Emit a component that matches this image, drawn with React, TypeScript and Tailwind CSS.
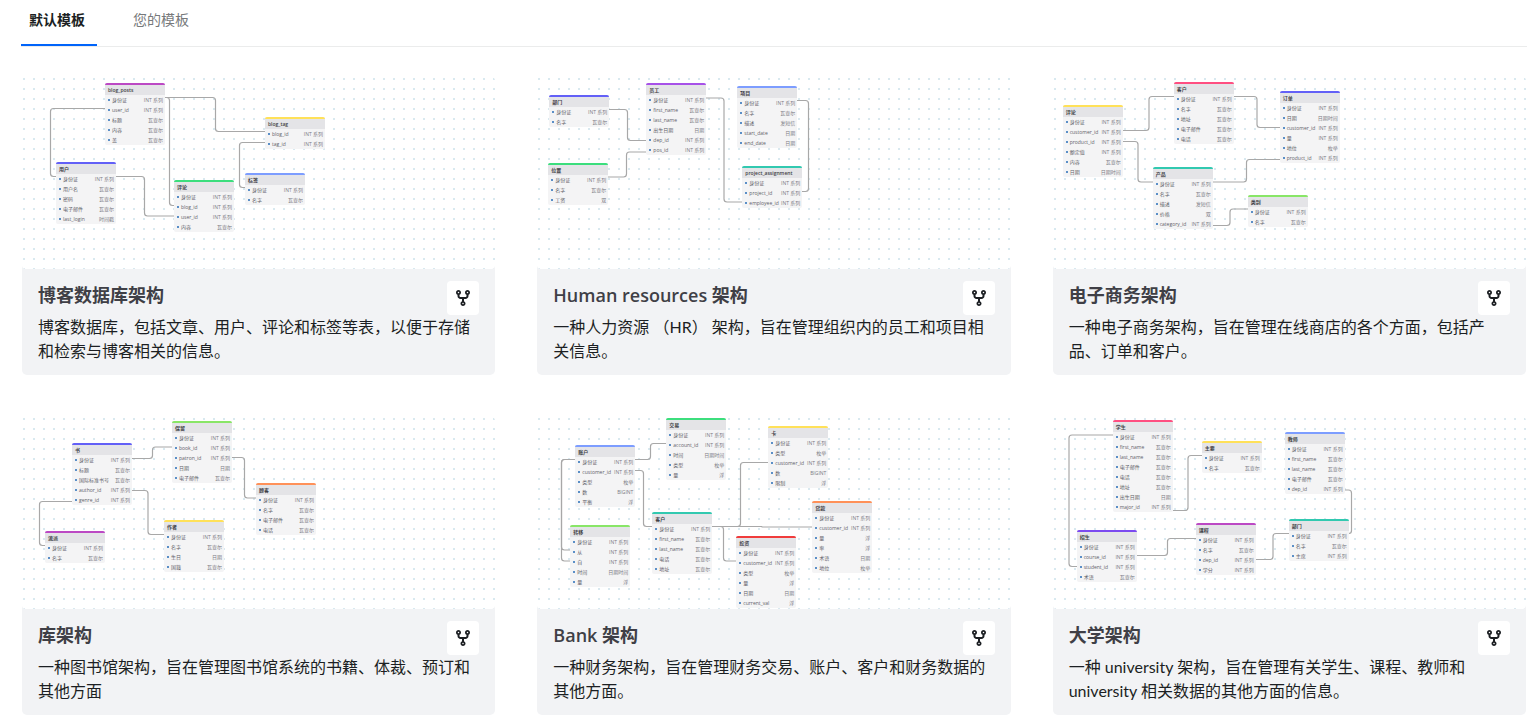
import React, { useState } from "react";
import { FaCodeFork } from "react-icons/fa6";

type Field = [name: string, type: string];
type TableNode = { name: string; x: number; y: number; color: string; fields: Field[] };
type Link = [x1: number, y1: number, midX: number, y2: number, x2: number];
type Template = { title: string; description: string; tables: TableNode[]; links: Link[] };

const INT = "INT 系列";
const VARCHAR = "瓦查尔";
const ID: Field = ["身份证", INT];
const NAME: Field = ["名字", VARCHAR];
const EMAIL: Field = ["电子邮件", VARCHAR];
const PHONE: Field = ["电话", VARCHAR];
const ADDRESS: Field = ["地址", VARCHAR];
const FIRST: Field = ["first_name", VARCHAR];
const LAST: Field = ["last_name", VARCHAR];

const templates: Template[] = [
  {
    title: "博客数据库架构",
    description: "博客数据库，包括文章、用户、评论和标签等表，以便于存储和检索与博客相关的信息。",
    tables: [
      { name: "blog_posts", x: 83, y: 6, color: "#bc49c4", fields: [ID, ["user_id", INT], ["标题", VARCHAR], ["内容", VARCHAR], ["盖", VARCHAR]] },
      { name: "blog_tag", x: 243, y: 40, color: "#ffe159", fields: [["blog_id", INT], ["tag_id", INT]] },
      { name: "用户", x: 34, y: 85, color: "#6360f7", fields: [ID, ["用户名", VARCHAR], ["密码", VARCHAR], EMAIL, ["last_login", "时间戳"]] },
      { name: "评论", x: 152, y: 103, color: "#3cde7d", fields: [ID, ["blog_id", INT], ["user_id", INT], ["内容", VARCHAR]] },
      { name: "标签", x: 223, y: 96, color: "#7d9dff", fields: [ID, NAME] },
    ],
    links: [
      [143, 20.5, 193.5, 54.5, 244],
      [143, 20.5, 147.5, 128.5, 152],
      [83, 31.5, 28.5, 99.5, 34],
      [94, 99.5, 122.5, 139, 152],
      [244, 65.5, 217.5, 110.5, 223],
    ],
  },
  {
    title: "Human resources 架构",
    description: "一种人力资源 （HR） 架构，旨在管理组织内的员工和项目相关信息。",
    tables: [
      { name: "部门", x: 12, y: 18, color: "#6360f7", fields: [ID, NAME] },
      { name: "员工", x: 109, y: 6, color: "#a751e8", fields: [ID, FIRST, LAST, ["出生日期", "日期"], ["dep_id", INT], ["pos_id", INT]] },
      { name: "项目", x: 200, y: 9, color: "#7d9dff", fields: [ID, NAME, ["描述", "发短信"], ["start_date", "日期"], ["end_date", "日期"]] },
      { name: "位置", x: 11, y: 86, color: "#3cde7d", fields: [ID, NAME, ["工资", "双"]] },
      { name: "project_assignment", x: 205, y: 89, color: "#32c9b0", fields: [ID, ["project_id", INT], ["employee_id", INT]] },
    ],
    links: [
      [72, 32.5, 90.5, 63.5, 109],
      [71, 100, 89.5, 75, 109],
      [169, 21, 187, 125, 205],
      [260, 23.5, 271.5, 114.5, 265],
    ],
  },
  {
    title: "电子商务架构",
    description: "一种电子商务架构，旨在管理在线商店的各个方面，包括产品、订单和客户。",
    tables: [
      { name: "评论", x: 10, y: 28, color: "#ffe159", fields: [ID, ["customer_id", INT], ["product_id", INT], ["额定值", INT], ["内容", VARCHAR], ["日期", "日期时间"]] },
      { name: "客户", x: 121, y: 5, color: "#ff4f81", fields: [ID, NAME, ADDRESS, EMAIL, PHONE] },
      { name: "订单", x: 227, y: 14, color: "#6360f7", fields: [ID, ["日期", "日期时间"], ["customer_id", INT], ["量", INT], ["地位", "枚举"], ["product_id", INT]] },
      { name: "产品", x: 100, y: 90, color: "#32c9b0", fields: [ID, NAME, ["描述", "发短信"], ["价格", "双"], ["category_id", INT]] },
      { name: "类别", x: 195, y: 118, color: "#89e667", fields: [ID, NAME] },
    ],
    links: [
      [70, 53.5, 96, 19.5, 121],
      [70, 64.5, 85, 105, 100],
      [181, 19.5, 204, 50.5, 227],
      [160, 105, 193.5, 82.5, 227],
      [160, 148.5, 177, 132, 195],
    ],
  },
  {
    title: "库架构",
    description: "一种图书馆架构，旨在管理图书馆系统的书籍、体裁、预订和其他方面",
    tables: [
      { name: "书", x: 50, y: 26, color: "#6360f7", fields: [ID, ["标题", VARCHAR], ["国际标准书号", VARCHAR], ["author_id", INT], ["genre_id", INT]] },
      { name: "保留", x: 150, y: 4, color: "#89e667", fields: [ID, ["book_id", INT], ["patron_id", INT], ["日期", "日期"], EMAIL] },
      { name: "顾客", x: 234, y: 66, color: "#ff9159", fields: [ID, NAME, EMAIL, PHONE] },
      { name: "作者", x: 142, y: 103, color: "#ffe159", fields: [ID, NAME, ["生日", "日期"], ["国籍", VARCHAR]] },
      { name: "流派", x: 23, y: 114, color: "#bc49c4", fields: [ID, NAME] },
    ],
    links: [
      [110, 41.5, 130.5, 30, 150],
      [110, 73.5, 126, 117.5, 142],
      [50, 84.5, 17.5, 128.5, 23],
      [210, 40.5, 222.5, 81, 234],
    ],
  },
  {
    title: "Bank 架构",
    description: "一种财务架构，旨在管理财务交易、账户、客户和财务数据的其他方面。",
    tables: [
      { name: "账户", x: 38, y: 28, color: "#7d9dff", fields: [ID, ["customer_id", INT], ["类型", "枚举"], ["数", "BIGINT"], ["平衡", "浮"]] },
      { name: "交易", x: 129, y: 1, color: "#3cde7d", fields: [ID, ["account_id", INT], ["时间", "日期时间"], ["类型", "枚举"], ["量", "浮"]] },
      { name: "卡", x: 231, y: 9, color: "#ffe159", fields: [ID, ["类型", "枚举"], ["customer_id", INT], ["数", "BIGINT"], ["限制", "浮"]] },
      { name: "客户", x: 115, y: 95, color: "#32c9b0", fields: [ID, FIRST, LAST, PHONE, ADDRESS] },
      { name: "转移", x: 33, y: 108, color: "#89e667", fields: [ID, ["从", INT], ["自", INT], ["时间", "日期时间"], ["量", "浮"]] },
      { name: "投资", x: 199, y: 119, color: "#f03c3c", fields: [ID, ["customer_id", INT], ["类型", "枚举"], ["量", "浮"], ["日期", "日期"], ["current_val", "浮"]] },
      { name: "贷款", x: 275, y: 84, color: "#ff9159", fields: [ID, ["customer_id", INT], ["量", "浮"], ["率", "浮"], ["术语", "日期"], ["地位", "枚举"]] },
    ],
    links: [
      [98, 42.5, 113.5, 26.5, 129],
      [98, 53.5, 106.5, 109.5, 115],
      [38, 42.5, 24.5, 133, 33],
      [38, 42.5, 24.5, 144, 33],
      [175, 109.5, 203.5, 45.5, 231],
      [175, 109.5, 186.5, 144, 199],
      [175, 109.5, 225, 110, 275],
    ],
  },
  {
    title: "大学架构",
    description: "一种 university 架构，旨在管理有关学生、课程、教师和 university 相关数据的其他方面的信息。",
    tables: [
      { name: "学生", x: 60, y: 3, color: "#ff4f81", fields: [ID, FIRST, LAST, EMAIL, PHONE, ADDRESS, ["出生日期", "日期"], ["major_id", INT]] },
      { name: "主要", x: 149, y: 24, color: "#ffe159", fields: [ID, NAME] },
      { name: "教师", x: 232, y: 15, color: "#7d9dff", fields: [ID, FIRST, LAST, EMAIL, ["dep_id", INT]] },
      { name: "招生", x: 24, y: 113, color: "#7c4af0", fields: [ID, ["course_id", INT], ["student_id", INT], ["术语", VARCHAR]] },
      { name: "课程", x: 143, y: 106, color: "#bc49c4", fields: [ID, NAME, ["dep_id", INT], ["学分", INT]] },
      { name: "部门", x: 236, y: 102, color: "#32c9b0", fields: [ID, NAME, ["主席", INT]] },
    ],
    links: [
      [60, 18, 16, 149.5, 24],
      [120, 93.5, 135, 38.5, 149],
      [84, 138.5, 114.5, 121.5, 143],
      [203, 142.5, 220, 116.5, 236],
      [292, 73, 298.5, 116.5, 296],
    ],
  },
];

function linkPath([x1, y1, mx, y2, x2]: Link) {
  const r = Math.min(3, Math.abs(y2 - y1) / 2);
  const into = Math.sign(mx - x1) * Math.min(r, Math.abs(mx - x1));
  const out = Math.sign(x2 - mx) * Math.min(r, Math.abs(x2 - mx));
  const down = Math.sign(y2 - y1) * r;
  return `M${x1} ${y1}H${mx - into}Q${mx} ${y1} ${mx} ${y1 + down}V${y2 - down}Q${mx} ${y2} ${mx + out} ${y2}H${x2}`;
}

function DiagramTable({ table }: { table: TableNode }) {
  return (
    <div
      className="absolute w-[60px] overflow-hidden rounded-[2px] bg-[#f4f4f5] font-['Open_Sans','Noto_Sans_CJK_SC',sans-serif] text-[5px] leading-[10px] whitespace-nowrap text-[#5f5f68]"
      style={{ left: table.x, top: table.y }}
    >
      <div className="h-[2px]" style={{ backgroundColor: table.color }} />
      <div className="h-[10px] bg-[#e4e4e7] pl-[3px] font-semibold text-[#3f3f46]">{table.name}</div>
      {table.fields.map(([name, type]) => (
        <div key={name} className="flex h-[10px] items-center justify-between pr-[2px] pl-[3px]">
          <span className="flex items-center gap-[2px]">
            <span className="size-[2px] bg-[#5b8fc7]" />
            {name}
          </span>
          <span className="text-[#7b7b84]">{type}</span>
        </div>
      ))}
    </div>
  );
}

function Thumbnail({ template, id }: { template: Template; id: number }) {
  return (
    <div className="relative h-48 overflow-hidden rounded bg-white">
      <svg className="absolute inset-0 size-full" aria-hidden="true">
        <defs>
          <pattern id={`dots-${id}`} width="10" height="10" patternUnits="userSpaceOnUse">
            <rect x="1" y="1" width="2" height="2" fill="#d8e9f0" />
          </pattern>
        </defs>
        <rect width="100%" height="100%" fill={`url(#dots-${id})`} />
        {template.links.map((link) => (
          <path key={link.join()} d={linkPath(link)} fill="none" stroke="#a8a8a8" strokeWidth="1.2" />
        ))}
      </svg>
      {template.tables.map((table) => (
        <DiagramTable key={table.name} table={table} />
      ))}
    </div>
  );
}

function TemplateCard({ template, id }: { template: Template; id: number }) {
  return (
    <article className="rounded-md border border-transparent bg-[#f2f3f5] bg-clip-padding">
      <Thumbnail template={template} id={id} />
      <div className="px-4 py-3">
        <div className="flex items-start justify-between">
          <h2 className="font-['Open_Sans','Noto_Sans_CJK_SC',sans-serif] text-lg leading-7 font-semibold text-[#3f3f46]">
            {template.title}
          </h2>
          <button
            type="button"
            aria-label={template.title}
            className="flex h-[34px] w-8 items-center justify-center rounded bg-white text-[#1c1f23]"
          >
            <FaCodeFork className="size-4" />
          </button>
        </div>
        <p className="text-base leading-6 text-[#1c1f23]">{template.description}</p>
      </div>
    </article>
  );
}

export default function App() {
  const [active, setActive] = useState(0);
  return (
    <main className="min-h-screen bg-white pr-[13px] pl-[21px] font-['Lato','Noto_Sans_CJK_SC',sans-serif]">
      <div role="tablist" className="flex gap-7 border-b border-[#ebecec]">
        {["默认模板", "您的模板"].map((label, i) => (
          <button
            key={label}
            type="button"
            role="tab"
            aria-selected={active === i}
            onClick={() => setActive(i)}
            className={
              active === i
                ? "h-[46px] border-b-2 border-[#0064fa] pr-3 pb-1 pl-2 text-sm font-bold text-[#1c1f23]"
                : "h-[46px] border-b-2 border-transparent pr-3 pb-1 pl-2 text-sm text-[#77797b]"
            }
          >
            {label}
          </button>
        ))}
      </div>
      <div className="mt-[29px] grid grid-cols-3 gap-10 pb-2">
        {templates.map((template, i) => (
          <TemplateCard key={template.title} template={template} id={i} />
        ))}
      </div>
    </main>
  );
}
